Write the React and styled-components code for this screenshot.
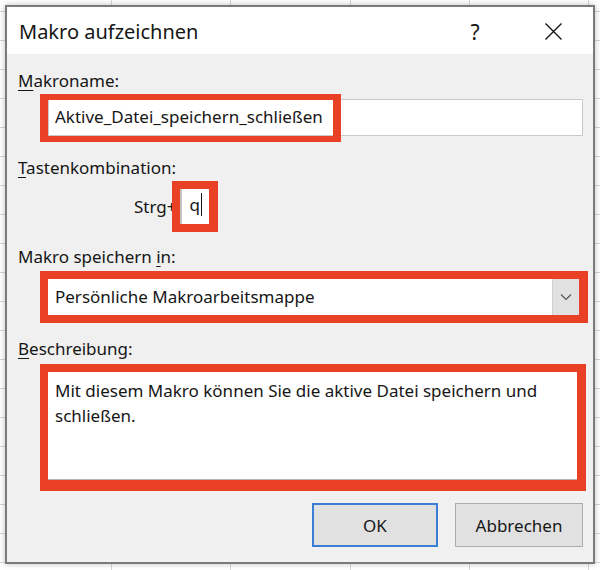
import React from 'react';
import styled, { createGlobalStyle } from 'styled-components';

const GlobalStyle = createGlobalStyle`
  html, body {
    margin: 0;
    padding: 0;
  }
  body {
    width: 600px;
    height: 570px;
    overflow: hidden;
    font-family: 'Noto Sans', 'Open Sans', sans-serif;
    color: #161616;
    background-color: #ffffff;
    background-image:
      repeating-linear-gradient(90deg, transparent 0 111px, #d6d6d6 111px 112px, transparent 112px 119.3px),
      repeating-linear-gradient(180deg, transparent 0 11px, #d6d6d6 11px 12px, transparent 12px 29px);
  }
`;

const Dialog = styled.div`
  box-sizing: border-box;
  margin: 5px 0 0 5px;
  width: 590px;
  height: 559px;
  border: 2px solid #7a7a7a;
  background: #f0f0f0;
  box-shadow: 0 0 6px rgba(0, 0, 0, 0.25);
  display: flex;
  flex-direction: column;
`;

const TitleBar = styled.div`
  height: 47px;
  background: #ffffff;
  display: flex;
  align-items: center;
  gap: 29px;
  padding-left: 12px;
`;

const Title = styled.div`
  flex: 1;
  font-size: 20px;
  padding-top: 2px;
`;

const TitleButton = styled.div`
  width: ${({ $w }) => $w}px;
  display: flex;
  justify-content: center;
  align-items: center;
  font-size: 21px;
  padding-top: 2px;
`;

const Body = styled.div`
  flex: 1;
  padding: 16px 10px 0 11px;
  display: flex;
  flex-direction: column;
`;

const Label = styled.div`
  font-size: 17px;
  line-height: 22px;
  margin-top: ${({ $mt }) => $mt || 0}px;

  u {
    text-underline-offset: 3px;
  }
`;

const Indent = styled.div`
  position: relative;
  margin: ${({ $mt }) => $mt || 0}px ${({ $mr }) => $mr || 0}px 0 ${({ $ml }) => $ml || 30}px;
`;

const TextInput = styled.div`
  box-sizing: border-box;
  height: 37px;
  background: #fff;
  border: 1px solid #c9c9c9;
  font-size: 17px;
  line-height: 34px;
  padding-left: 6px;
`;

const Highlight = styled.div`
  position: absolute;
  left: -8px;
  top: -5px;
  width: 301px;
  height: 48px;
  box-sizing: border-box;
  border: 8px solid #ea4025;
  border-top-width: 6px;
  border-bottom-width: 6px;
`;

const Marked = styled.div`
  border: 8px solid #ea4025;
  border-bottom-width: ${({ $bb }) => $bb || 8}px;
  border-right-width: 9px;
  display: ${({ $inline }) => ($inline ? 'inline-block' : 'block')};
  margin-left: ${({ $ml }) => $ml || 0}px;
`;

const ShortcutRow = styled.div`
  display: flex;
  align-items: center;
  margin-left: 116px;
  margin-top: 2px;
  font-size: 17px;
`;

const KeyBox = styled.div`
  box-sizing: border-box;
  width: 29px;
  height: 35px;
  background: #fff;
  border-left: 2px solid #c4c4c4;
  font-size: 17px;
  line-height: 32px;
  padding-left: 8px;

  span {
    border-right: 1px solid #111;
    padding-right: 1px;
  }
`;

const Combo = styled.div`
  height: 36px;
  background: #fff;
  display: flex;
  font-size: 17px;
`;

const ComboText = styled.div`
  flex: 1;
  line-height: 36px;
  padding-left: 7px;
`;

const ComboArrow = styled.div`
  width: 26px;
  background: #e1e1e1;
  border-left: 1px solid #cfcfcf;
  display: flex;
  align-items: center;
  justify-content: center;
`;

const TextArea = styled.div`
  box-sizing: border-box;
  height: 108px;
  background: #fff;
  border-bottom: 1px solid #b5b5b5;
  font-size: 17px;
  line-height: 25px;
  padding: 6px 7px 0;
`;

const ButtonRow = styled.div`
  display: flex;
  justify-content: flex-end;
  gap: 17px;
  margin-top: 12px;
`;

const Button = styled.button`
  box-sizing: border-box;
  width: ${({ $w }) => $w}px;
  height: 44px;
  background: #e1e1e1;
  border: ${({ $primary }) => ($primary ? '2px solid #3a7fd6' : '1px solid #adadad')};
  font-family: inherit;
  font-size: 17px;
  color: #161616;
  padding: 0;
`;

const CloseIcon = () => (
  <svg width="19" height="19" viewBox="0 0 19 19">
    <path d="M1.5 1.5 L17.5 17.5 M17.5 1.5 L1.5 17.5" stroke="#161616" strokeWidth="1.4" fill="none" />
  </svg>
);

const ChevronIcon = () => (
  <svg width="12" height="8" viewBox="0 0 12 8">
    <path d="M1 1.5 L6 6.5 L11 1.5" stroke="#555" strokeWidth="1.2" fill="none" />
  </svg>
);

const App = () => {
  return (
    <>
      <GlobalStyle />
      <Dialog>
        <TitleBar>
          <Title>Makro aufzeichnen</Title>
          <TitleButton $w={18}>?</TitleButton>
          <TitleButton $w={80}>
            <CloseIcon />
          </TitleButton>
        </TitleBar>

        <Body>
          <Label>
            <u>M</u>akroname:
          </Label>
          <Indent $mt={7}>
            <TextInput>Aktive_Datei_speichern_schließen</TextInput>
            <Highlight />
          </Indent>

          <Label $mt={21}>
            <u>T</u>astenkombination:
          </Label>
          <ShortcutRow>
            <span>Strg+</span>
            <Marked $inline $ml={-5}>
              <KeyBox>
                <span>q</span>
              </KeyBox>
            </Marked>
          </ShortcutRow>

          <Label $mt={14}>
            Makro speichern <u>i</u>n:
          </Label>
          <Indent $mt={3} $ml={22} $mr={-5}>
            <Marked>
              <Combo>
                <ComboText>Persönliche Makroarbeitsmappe</ComboText>
                <ComboArrow>
                  <ChevronIcon />
                </ComboArrow>
              </Combo>
            </Marked>
          </Indent>

          <Label $mt={15}>
            <u>B</u>eschreibung:
          </Label>
          <Indent $mt={4} $ml={22} $mr={-3}>
            <Marked $bb={11}>
              <TextArea>
                Mit diesem Makro können Sie die aktive Datei speichern und schließen.
              </TextArea>
            </Marked>
          </Indent>

          <ButtonRow>
            <Button $primary $w={126}>OK</Button>
            <Button $w={128}>Abbrechen</Button>
          </ButtonRow>
        </Body>
      </Dialog>
    </>
  );
};

export default App;
